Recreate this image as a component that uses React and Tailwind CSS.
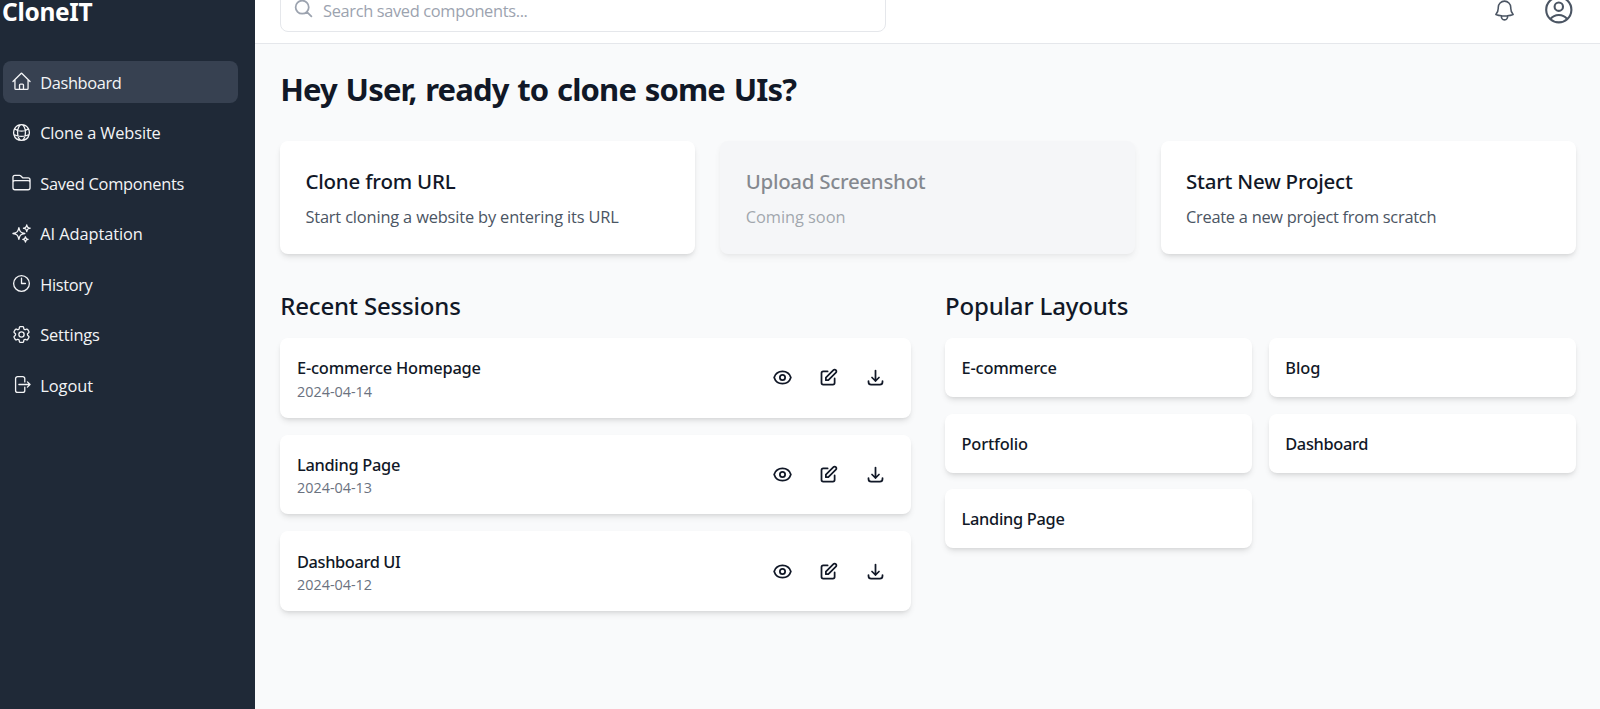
import React from "react";
import {
  HiOutlineHome,
  HiOutlineGlobeAlt,
  HiOutlineFolder,
  HiOutlineSparkles,
  HiOutlineClock,
  HiOutlineCog6Tooth,
  HiOutlineArrowRightOnRectangle,
  HiOutlineMagnifyingGlass,
  HiOutlineBell,
  HiOutlineUserCircle,
} from "react-icons/hi2";
import { HiOutlineEye, HiOutlinePencilAlt, HiOutlineDownload } from "react-icons/hi";

const navItems = [
  { label: "Dashboard", Icon: HiOutlineHome, active: true, tracking: "tracking-[-0.36px]" },
  { label: "Clone a Website", Icon: HiOutlineGlobeAlt, tracking: "tracking-[-0.14px]" },
  { label: "Saved Components", Icon: HiOutlineFolder, tracking: "tracking-[-0.25px]" },
  { label: "AI Adaptation", Icon: HiOutlineSparkles, tracking: "tracking-[-0.07px]" },
  { label: "History", Icon: HiOutlineClock, tracking: "tracking-[-0.35px]" },
  { label: "Settings", Icon: HiOutlineCog6Tooth, tracking: "tracking-[-0.15px]" },
  { label: "Logout", Icon: HiOutlineArrowRightOnRectangle, tracking: "tracking-[-0.02px]" },
];

const actionCards = [
  {
    title: "Clone from URL",
    text: "Start cloning a website by entering its URL",
    titleTracking: "tracking-[-0.2px]",
    textTracking: "tracking-[-0.16px]",
  },
  {
    title: "Upload Screenshot",
    text: "Coming soon",
    disabled: true,
    titleTracking: "tracking-[-0.3px]",
    textTracking: "tracking-[-0.04px]",
  },
  {
    title: "Start New Project",
    text: "Create a new project from scratch",
    titleTracking: "tracking-[-0.22px]",
    textTracking: "tracking-[-0.26px]",
  },
];

const sessions = [
  { name: "E-commerce Homepage", date: "2024-04-14", tracking: "tracking-[-0.2px]" },
  { name: "Landing Page", date: "2024-04-13", tracking: "tracking-[-0.3px]" },
  { name: "Dashboard UI", date: "2024-04-12", tracking: "tracking-[-0.38px]" },
];

const layouts = [
  { name: "E-commerce", tracking: "tracking-[-0.18px]" },
  { name: "Blog", tracking: "tracking-[0px]" },
  { name: "Portfolio", tracking: "tracking-[-0.18px]" },
  { name: "Dashboard", tracking: "tracking-[-0.34px]" },
  { name: "Landing Page", tracking: "tracking-[-0.3px]" },
];

function Sidebar() {
  return (
    <aside className="w-[255px] shrink-0 bg-[#1f2937] pl-[3px] pr-[17px] text-white">
      <div className="-ml-px -mt-[5px] h-[33.6px] font-['Noto_Sans'] text-[24.5px] font-bold leading-[33.6px] tracking-[-0.32px]">
        CloneIT
      </div>
      <nav className="mt-[32.4px] flex flex-col gap-[8.5px]">
        {navItems.map(({ label, Icon, active, tracking }) => (
          <a
            key={label}
            className={`flex h-[42px] items-center gap-[8.2px] rounded-lg px-[8px] ${active ? "bg-[#374151]" : ""}`}
          >
            <Icon className="size-[21px] shrink-0 text-[#f3f4f6]" />
            <span className={`pt-[0.4px] text-[16.4px] leading-[25.2px] text-[#f3f4f6] ${tracking}`}>{label}</span>
          </a>
        ))}
      </nav>
    </aside>
  );
}

function Header() {
  return (
    <header className="-mt-[23px] flex h-[67px] shrink-0 items-center justify-between border-b border-[#e5e7eb] bg-white pl-[25px] pr-6">
      <div className="flex h-[44px] w-[606px] items-center gap-[9.5px] rounded-lg border border-[#e5e7eb] pl-[11.5px]">
        <HiOutlineMagnifyingGlass className="-mt-[3px] size-[21px] stroke-2 text-[#9ca3af]" />
        <span className="pt-[2px] text-[16.4px] leading-[25.2px] tracking-[-0.34px] text-[#9ca3af]">
          Search saved components...
        </span>
      </div>
      <div className="flex items-center gap-[25px] text-[#4b5563]">
        <HiOutlineBell className="size-[25px]" />
        <HiOutlineUserCircle className="size-[33.6px]" />
      </div>
    </header>
  );
}

function ActionCard({ title, text, disabled, titleTracking, textTracking }) {
  return (
    <div
      className={`rounded-lg px-[25.2px] pb-[24.4px] pt-[25.2px] shadow-md ${disabled ? "bg-[#f3f4f6] opacity-50" : "bg-white"}`}
    >
      <h3
        className={`mb-[8.2px] pt-px font-['Noto_Sans'] text-[20.5px] font-medium leading-[29.4px] ${titleTracking}`}
      >
        {title}
      </h3>
      <p className={`text-[16.4px] leading-[25.2px] text-[#4b5563] ${textTracking}`}>{text}</p>
    </div>
  );
}

function SessionRow({ name, date, tracking }) {
  return (
    <div className="flex h-[79.8px] items-center justify-between rounded-lg bg-white p-[16.8px] shadow-md">
      <div className="pt-[1.2px]">
        <h3 className={`font-['Noto_Sans'] text-[16.4px] font-medium leading-[25.2px] ${tracking}`}>{name}</h3>
        <p className="text-[14.4px] leading-[21px] text-[#6b7280]">{date}</p>
      </div>
      <div className="flex gap-[8.4px] text-[#111827]">
        {[HiOutlineEye, HiOutlinePencilAlt, HiOutlineDownload].map((Icon, i) => (
          <button key={i} className="p-[8.4px]">
            <Icon className="size-[21px]" />
          </button>
        ))}
      </div>
    </div>
  );
}

export default function App() {
  return (
    <div className="flex h-[709px] w-[1600px] overflow-hidden bg-[#f9fafb] font-['Open_Sans','Noto_Sans',sans-serif] text-[#111827]">
      <Sidebar />
      <div className="flex min-w-0 flex-1 flex-col">
        <Header />
        <main className="pl-[25.2px] pr-[24.5px] pt-[27.2px]">
          <h1 className="mb-[31.6px] font-['Noto_Sans'] text-[31px] font-bold leading-[37.8px] tracking-[-0.86px] [word-spacing:1.5px]">
            Hey User, ready to clone some UIs?
          </h1>
          <div className="mb-[33.6px] grid grid-cols-3 gap-[25.6px]">
            {actionCards.map((card) => (
              <ActionCard key={card.title} {...card} />
            ))}
          </div>
          <div className="grid grid-cols-2 gap-[34.2px]">
            <section>
              <h2 className="mb-[15.2px] pt-[1.6px] font-['Noto_Sans'] text-[24px] font-medium leading-[33.6px] tracking-[-0.18px]">
                Recent Sessions
              </h2>
              <div className="flex flex-col gap-[16.9px]">
                {sessions.map((session) => (
                  <SessionRow key={session.name} {...session} />
                ))}
              </div>
            </section>
            <section>
              <h2 className="mb-[15.2px] pt-[1.6px] font-['Noto_Sans'] text-[24px] font-medium leading-[33.6px] tracking-[-0.16px]">
                Popular Layouts
              </h2>
              <div className="grid grid-cols-2 gap-[16.8px]">
                {layouts.map(({ name, tracking }) => (
                  <div key={name} className="rounded-lg bg-white px-[16.6px] pb-[16.5px] pt-[17.2px] shadow-md">
                    <h3 className={`font-['Noto_Sans'] text-[16.4px] font-medium leading-[25.2px] ${tracking}`}>
                      {name}
                    </h3>
                  </div>
                ))}
              </div>
            </section>
          </div>
        </main>
      </div>
    </div>
  );
}
